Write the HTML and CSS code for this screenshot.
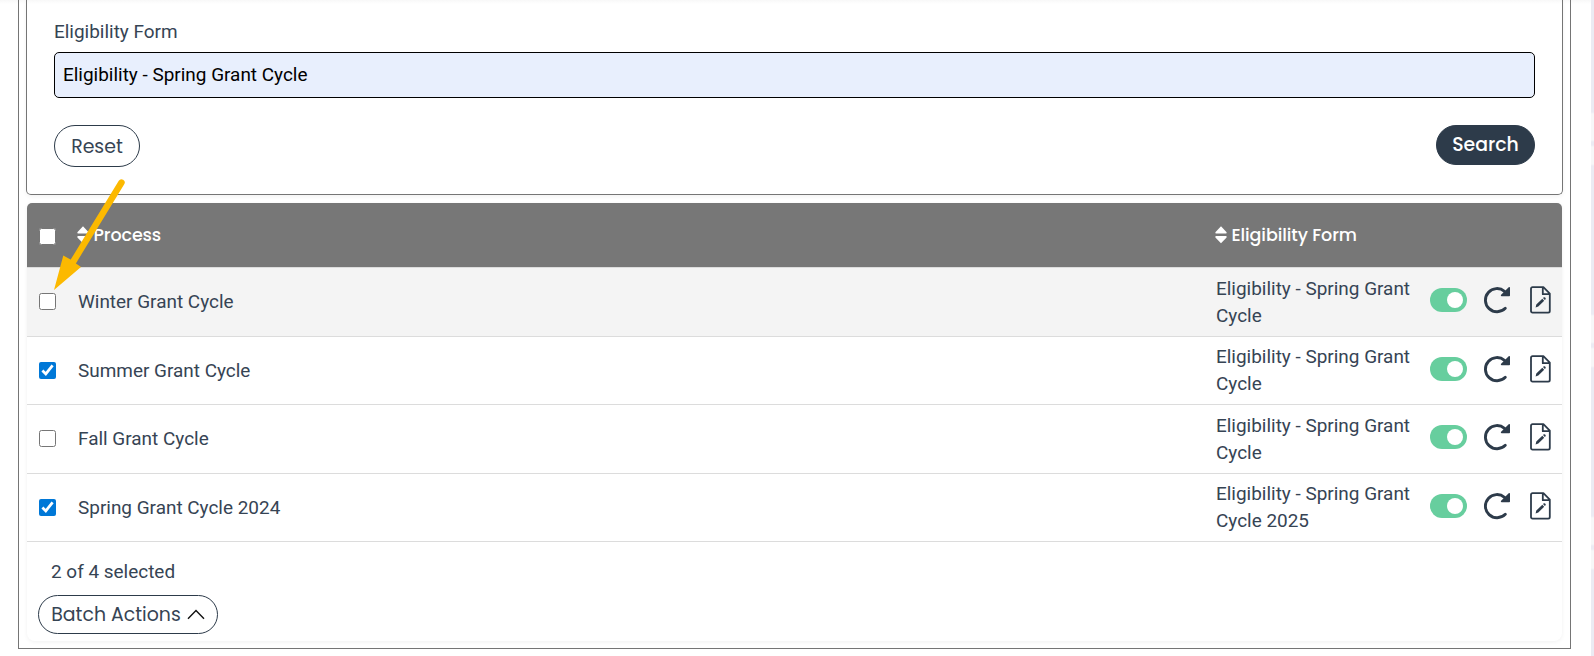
FILE: index.html
```html
<!DOCTYPE html>
<html lang="en">
<head>
    <meta charset="UTF-8">
    <meta name="viewport" content="width=device-width, initial-scale=1.0">
    <title>Processes</title>
    <link rel="stylesheet" href="styles.css">
</head>
<body>
    <!-- shared icons -->
    <svg class="icon-defs" width="0" height="0">
        <symbol id="sort" viewBox="0 0 12 18">
            <path d="M6 0.3 L11.6 6.2 Q12 7.5 10.8 7.6 H1.2 Q0 7.5 0.4 6.2 Z M6 17.3 L11.6 11.4 Q12 10 10.8 10 H1.2 Q0 10 0.4 11.4 Z" fill="#fff"/>
        </symbol>
        <symbol id="refresh" viewBox="0 0 28 28">
            <path d="M22.3 22.3 A11.6 11.6 0 1 1 21.5 5.3" fill="none" stroke="#2d3b4a" stroke-width="2.9" stroke-linecap="round"/>
            <path d="M27 1.6 V9.5 Q27 10.3 26.2 10.3 H18.6 Q17.2 9.8 18.1 8.7 L25.7 1.2 Q26.7 0.7 27 1.6 Z" fill="#2d3b4a"/>
        </symbol>
        <symbol id="edit-file" viewBox="0 0 21 28">
            <path d="M2.6 1.2 H13.4 L19.8 7.6 V25 Q19.8 26.6 18.2 26.6 H2.6 Q1 26.6 1 25 V2.8 Q1 1.2 2.6 1.2 Z M12.8 1.4 V8.2 H19.6" fill="none" stroke="#2d3b4a" stroke-width="1.8" stroke-linejoin="round"/>
            <path d="M5.6 21.4 L6.3 18.6 L12.3 12.8 L14.2 14.7 L8.3 20.6 Z M13 12.1 L13.9 11.3 Q15 11 15.6 12 Q15.9 12.7 15.6 13.3 L14.8 14 Z" fill="#2d3b4a"/>
        </symbol>
    </svg>

    <main class="page">
        <div class="panel">
            <form class="search-card">
                <label class="field-label" for="eligibility">Eligibility Form</label>
                <input class="field-input" id="eligibility" type="text" value="Eligibility - Spring Grant Cycle">
                <div class="form-actions">
                    <button class="btn btn-reset" type="button">Reset</button>
                    <button class="btn btn-search" type="button">Search</button>
                </div>
            </form>

            <div class="table-card">
                <div class="table-head">
                    <input class="check" type="checkbox">
                    <div class="head-cell"><svg class="sort"><use href="#sort"/></svg><span>Process</span></div>
                    <div class="head-cell"><svg class="sort"><use href="#sort"/></svg><span>Eligibility Form</span></div>
                </div>
                <div class="table-row highlight">
                    <input class="check" type="checkbox">
                    <div>Winter Grant Cycle</div>
                    <div>Eligibility - Spring Grant Cycle</div>
                    <div class="row-actions">
                        <span class="toggle"></span>
                        <svg class="refresh"><use href="#refresh"/></svg>
                        <svg class="edit-file"><use href="#edit-file"/></svg>
                    </div>
                </div>
                <div class="table-row">
                    <input class="check" type="checkbox" checked>
                    <div>Summer Grant Cycle</div>
                    <div>Eligibility - Spring Grant Cycle</div>
                    <div class="row-actions">
                        <span class="toggle"></span>
                        <svg class="refresh"><use href="#refresh"/></svg>
                        <svg class="edit-file"><use href="#edit-file"/></svg>
                    </div>
                </div>
                <div class="table-row">
                    <input class="check" type="checkbox">
                    <div>Fall Grant Cycle</div>
                    <div>Eligibility - Spring Grant Cycle</div>
                    <div class="row-actions">
                        <span class="toggle"></span>
                        <svg class="refresh"><use href="#refresh"/></svg>
                        <svg class="edit-file"><use href="#edit-file"/></svg>
                    </div>
                </div>
                <div class="table-row">
                    <input class="check" type="checkbox" checked>
                    <div>Spring Grant Cycle 2024</div>
                    <div>Eligibility - Spring Grant Cycle 2025</div>
                    <div class="row-actions">
                        <span class="toggle"></span>
                        <svg class="refresh"><use href="#refresh"/></svg>
                        <svg class="edit-file"><use href="#edit-file"/></svg>
                    </div>
                </div>
                <div class="table-footer">
                    <div class="selected-count">2 of 4 selected</div>
                    <button class="btn btn-batch" type="button">
                        Batch Actions
                        <svg class="chevron" viewBox="0 0 18 11"><path d="M1 9.8 L9 1.6 L17 9.8" fill="none" stroke="#111" stroke-width="1.4"/></svg>
                    </button>
                </div>
            </div>
        </div>
    </main>

    <svg class="pointer" viewBox="0 0 80 120">
        <path d="M71.5 12.5 L23 92" stroke="#fcb900" stroke-width="6.4" stroke-linecap="round"/>
        <path d="M4 120 L13.3 85.5 L20.5 89.5 L24.5 92.5 L31 97 Z" fill="#fcb900"/>
    </svg>
</body>
</html>
```
FILE: styles.css
```css
* {
    box-sizing: border-box;
}

body {
    margin: 0;
    height: 656px;
    overflow: hidden;
    font-family: Roboto, sans-serif;
    font-size: 18.95px;
    line-height: 27px;
    color: #364454;
    background: repeating-linear-gradient(#ebebf3 0 112px, #f7f7f8 114px 140px, #ebebf3 142px 145px, #f7f7f8 147px 164px, #ebebf3 166px 202px);
}

.icon-defs {
    position: absolute;
}

.page {
    height: 656px;
    margin-right: 3px;
    padding: 0 20px 0 18px;
    background: linear-gradient(#f8f8f8, #fff 4px);
}

.panel {
    height: 649px;
    padding: 0 7px;
    border: 1px solid #757575;
    border-top: none;
}

.search-card {
    height: 195px;
    padding: 18px 27px 0;
    border: 1px solid #757575;
    border-top: none;
    border-radius: 0 0 5px 5px;
    box-shadow: 0 2px 4px rgba(0, 0, 0, 0.05);
}

.field-label {
    display: block;
}

.field-input {
    display: block;
    width: 100%;
    height: 46px;
    margin-top: 7px;
    padding: 0 8px 2px;
    border: 1px solid #000;
    border-radius: 5px;
    background: #e8effd;
    color: #000;
    font: inherit;
}

.form-actions {
    display: flex;
    justify-content: space-between;
    align-items: flex-start;
    margin-top: 27px;
}

.btn {
    padding: 0;
    border: 1px solid #2d3b4a;
    border-radius: 21px;
    background: #fff;
    color: #364454;
    font-family: Poppins, Inter, sans-serif;
    font-size: 18.9px;
}

.btn-reset {
    width: 86px;
    height: 42px;
}

.btn-search {
    width: 99px;
    height: 40px;
    padding-bottom: 2px;
    background: #2d3b4a;
    color: #fff;
    font-weight: 500;
}

.table-card {
    height: 438px;
    margin: 8px 1px 0;
    border-radius: 5px 5px 8px 8px;
    box-shadow: 0 1px 4px rgba(0, 0, 0, 0.06);
}

.table-head,
.table-row {
    display: grid;
    grid-template-columns: 40px 1fr 214px 132px;
    align-items: center;
    padding-left: 11px;
    border-bottom: 1px solid #dcdcdc;
}

.table-head {
    height: 65px;
    border-radius: 5px 5px 0 0;
    background: #777;
    color: #fff;
    font-family: Poppins, Inter, sans-serif;
    font-size: 17.5px;
    font-weight: 500;
    letter-spacing: -0.1px;
}

.head-cell {
    display: flex;
    align-items: center;
    gap: 4.5px;
    margin-left: -1px;
}

.sort {
    width: 12px;
    height: 18px;
}

.table-row {
    height: 68.5px;
}

.highlight {
    background: #f4f4f4;
}

.check {
    width: 17px;
    height: 17px;
    margin: 0 0 0 0.5px;
    accent-color: #0078d7;
}

.table-head .check {
    margin-top: 3px;
}

.row-actions {
    display: flex;
    align-items: center;
    margin-top: -3px;
}

.toggle {
    display: flex;
    justify-content: flex-end;
    width: 37px;
    height: 24px;
    padding: 4px;
    border-radius: 12px;
    background: #67ce9e;
}

.toggle::after {
    content: "";
    width: 16px;
    height: 16px;
    border-radius: 50%;
    background: #fff;
}

.refresh {
    width: 28px;
    height: 28px;
    margin-left: 16px;
}

.edit-file {
    width: 21px;
    height: 28px;
    margin-left: 19px;
}

.table-footer {
    padding: 16px 11px 0;
}

.selected-count {
    padding-left: 13px;
}

.btn-batch {
    display: flex;
    justify-content: center;
    align-items: center;
    gap: 6px;
    width: 180px;
    height: 39px;
    margin-top: 10px;
}

.chevron {
    width: 18px;
    height: 11px;
}

/* arrow drawn over the form and the table */
.pointer {
    position: absolute;
    top: 170px;
    left: 50px;
    width: 80px;
    height: 120px;
}
```
